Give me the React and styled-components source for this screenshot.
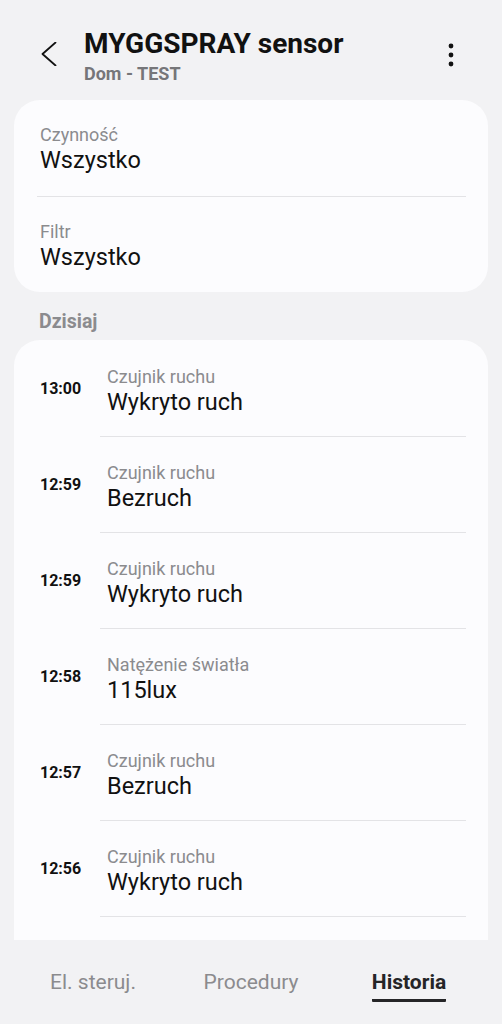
import React from 'react';
import styled, { createGlobalStyle } from 'styled-components';

const GlobalStyle = createGlobalStyle`
  * { box-sizing: border-box; }
  html, body { margin: 0; padding: 0; background: #f2f2f4; }
  body { font-family: Roboto, "Noto Sans", "Liberation Sans", sans-serif; }
`;

const Page = styled.div`
  width: 502px;
  height: 1024px;
  display: flex;
  flex-direction: column;
  overflow: hidden;
  background: #f2f2f4;
`;

const Scroll = styled.div`
  flex: 1;
  overflow: hidden;
  padding: 0 14px;
`;

const Header = styled.header`
  height: 100px;
  display: flex;
  align-items: flex-start;
  padding-top: 28px;
  margin: 0 -14px;
`;

const IconButton = styled.button`
  border: 0;
  background: none;
  padding: 0;
  width: 24px;
  height: 24px;
  margin: ${p => p.$margin};
  display: flex;
  align-items: center;
  justify-content: center;
  color: #111;
`;

const TitleBlock = styled.div`
  flex: 1;
  display: flex;
  flex-direction: column;
  gap: 3px;
`;

const Title = styled.h1`
  margin: 0;
  font-size: 28px;
  line-height: 32px;
  font-weight: 700;
  color: #111;
`;

const Subtitle = styled.div`
  font-size: 18px;
  line-height: 22px;
  font-weight: 700;
  color: #767679;
`;

const Card = styled.section`
  background: #fcfcfe;
  border-radius: ${p => (p.$open ? '26px 26px 0 0' : '26px')};
  padding: ${p => (p.$open ? '1px 22px 60px 26px' : '0 22px 0 23px')};
`;

const FilterRow = styled.div`
  padding: 24px 0 ${p => (p.$last ? '21px' : '22px')} 3px;
  border-bottom: ${p => (p.$last ? 'none' : '1px solid #e3e3e6')};
`;

const Label = styled.div`
  font-size: 18px;
  line-height: 22px;
  color: #8b8b8e;
`;

const Value = styled.div`
  font-size: 23.5px;
  line-height: 28px;
  color: #111;
`;

const SectionTitle = styled.h2`
  margin: 0;
  padding: 18px 0 0 25px;
  height: 48px;
  font-size: 19.5px;
  line-height: 24px;
  font-weight: 700;
  color: #8b8b8e;
`;

const EventRow = styled.div`
  display: flex;
  align-items: stretch;
`;

const Time = styled.div`
  width: 60px;
  flex-shrink: 0;
  display: flex;
  align-items: center;
  padding-bottom: 2px;
  font-size: 16px;
  font-weight: 700;
  color: #111;
`;

const EventBody = styled.div`
  flex: 1;
  padding: 25px 0 20px 7px;
  border-bottom: 1px solid #e3e3e6;
`;

const TabBar = styled.nav`
  height: 84px;
  flex-shrink: 0;
  display: grid;
  grid-template-columns: repeat(3, 1fr);
  align-items: start;
  padding: 30px 14px 0;
  background: #f2f2f4;
`;

const Tab = styled.div`
  display: flex;
  align-items: flex-start;
  justify-content: center;
`;

const TabLabel = styled.span`
  display: inline-block;
  font-size: 21px;
  line-height: 24px;
  font-weight: ${p => (p.$active ? 700 : 400)};
  color: ${p => (p.$active ? '#252527' : '#8b8b8e')};
  padding-bottom: 5px;
  border-bottom: 3px solid ${p => (p.$active ? '#252527' : 'transparent')};
  border-radius: 1px;
`;

const events = [
  { time: '13:00', label: 'Czujnik ruchu', value: 'Wykryto ruch' },
  { time: '12:59', label: 'Czujnik ruchu', value: 'Bezruch' },
  { time: '12:59', label: 'Czujnik ruchu', value: 'Wykryto ruch' },
  { time: '12:58', label: 'Natężenie światła', value: '115lux' },
  { time: '12:57', label: 'Czujnik ruchu', value: 'Bezruch' },
  { time: '12:56', label: 'Czujnik ruchu', value: 'Wykryto ruch' },
];

export default function App() {
  return (
    <Page>
      <GlobalStyle />
      <Scroll>
        <Header>
          <IconButton $margin="14px 23px 0 37px" aria-label="Wstecz">
            <svg width="24" height="24" viewBox="0 0 24 24" fill="none">
              <path d="M18.5 0.5 L5.5 12 L18.5 23.5" stroke="#111" strokeWidth="1.8" strokeLinecap="round" strokeLinejoin="round" />
            </svg>
          </IconButton>
          <TitleBlock>
            <Title>MYGGSPRAY sensor</Title>
            <Subtitle>Dom - TEST</Subtitle>
          </TitleBlock>
          <IconButton $margin="15px 39px 0 0" aria-label="Więcej">
            <svg width="24" height="24" viewBox="0 0 24 24">
              <circle cx="12" cy="3" r="2.4" fill="#111" />
              <circle cx="12" cy="12" r="2.4" fill="#111" />
              <circle cx="12" cy="21" r="2.4" fill="#111" />
            </svg>
          </IconButton>
        </Header>

        <Card>
          <FilterRow>
            <Label>Czynność</Label>
            <Value>Wszystko</Value>
          </FilterRow>
          <FilterRow $last>
            <Label>Filtr</Label>
            <Value>Wszystko</Value>
          </FilterRow>
        </Card>

        <SectionTitle>Dzisiaj</SectionTitle>

        <Card $open>
          {events.map((e, i) => (
            <EventRow key={i}>
              <Time>{e.time}</Time>
              <EventBody>
                <Label>{e.label}</Label>
                <Value>{e.value}</Value>
              </EventBody>
            </EventRow>
          ))}
        </Card>
      </Scroll>

      <TabBar>
        <Tab><TabLabel>El. steruj.</TabLabel></Tab>
        <Tab><TabLabel>Procedury</TabLabel></Tab>
        <Tab><TabLabel $active>Historia</TabLabel></Tab>
      </TabBar>
    </Page>
  );
}
